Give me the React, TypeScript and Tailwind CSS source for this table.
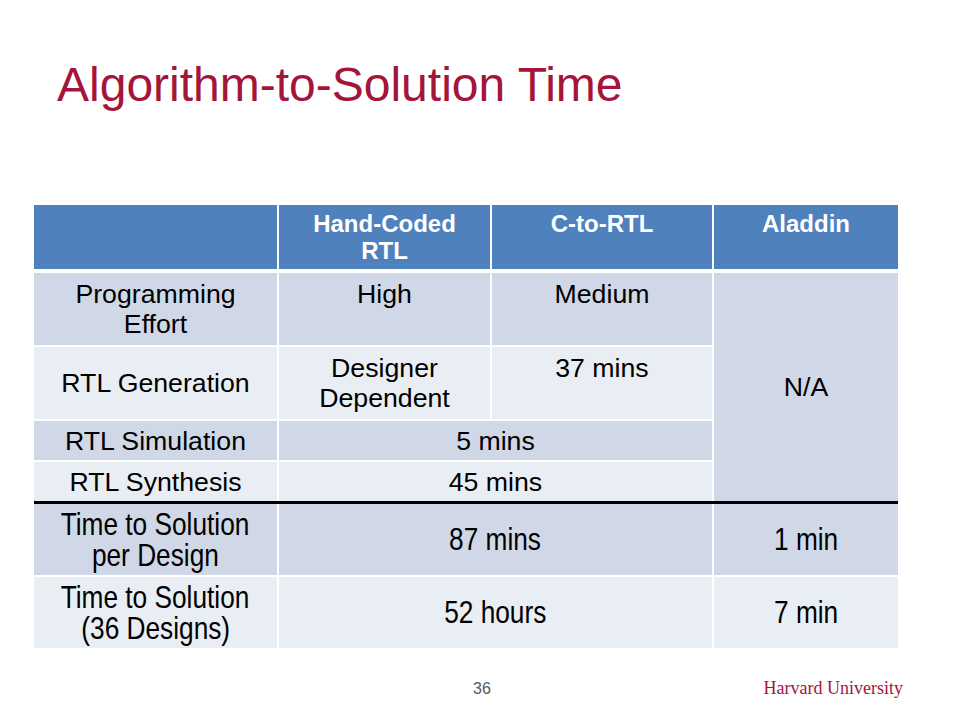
import React from "react";

const sans = "font-['Liberation_Sans',Arial,sans-serif]";

const odd = "bg-[#d0d8e8]";
const even = "bg-[#e9edf4]";

function Cell({
  children,
  className = "",
}: {
  children?: React.ReactNode;
  className?: string;
}) {
  return (
    <div className={`flex flex-col items-center text-center text-black text-[26.7px] leading-[30px] ${className}`}>
      {children}
    </div>
  );
}

function N({ children }: { children: React.ReactNode }) {
  return <span className="inline-block whitespace-nowrap scale-x-[0.82] origin-center">{children}</span>;
}

function Head({ children }: { children?: React.ReactNode }) {
  return (
    <div className="h-[64px] bg-[#4f81bd] text-white font-bold text-[24px] leading-[27px] text-center pt-[5px]">
      {children}
    </div>
  );
}

export default function App() {
  return (
    <div className={`w-[960px] h-[720px] bg-white flex flex-col ${sans}`}>
      <h1 className="pt-[61px] pl-[57px] text-[48px] leading-[47px] text-[#a3153a] font-normal">
        Algorithm-to-Solution Time
      </h1>

      <div className="mt-[97px] ml-[34px] w-[864px]">
        <div className="grid grid-cols-[243px_211px_220px_184px] grid-rows-[66px_72px_72px_39px_39px] gap-x-[2px] gap-y-[2px]">
          {/* header */}
          <div className="h-[64px] bg-[#4f81bd]" />
          <Head>
            Hand-Coded
            <br />
            RTL
          </Head>
          <Head>C-to-RTL</Head>
          <Head>Aladdin</Head>

          {/* row 1 */}
          <Cell className={`${odd} justify-center`}>
            <span>Programming</span>
            <span>Effort</span>
          </Cell>
          <Cell className={`${odd} pt-[6px]`}>High</Cell>
          <Cell className={`${odd} pt-[6px]`}>Medium</Cell>
          <Cell className={`${odd} row-span-4 justify-center`}>N/A</Cell>

          {/* row 2 */}
          <Cell className={`${even} justify-center`}>RTL Generation</Cell>
          <Cell className={`${even} justify-center`}>
            <span>Designer</span>
            <span>Dependent</span>
          </Cell>
          <Cell className={`${even} pt-[6px]`}>37 mins</Cell>

          {/* row 3 */}
          <Cell className={`${odd} justify-center`}>RTL Simulation</Cell>
          <Cell className={`${odd} col-span-2 justify-center`}>5 mins</Cell>

          {/* row 4 */}
          <Cell className={`${even} justify-center`}>RTL Synthesis</Cell>
          <Cell className={`${even} col-span-2 justify-center`}>45 mins</Cell>
        </div>

        <div className="h-[3px] bg-black" />

        <div className="grid grid-cols-[243px_433px_184px] grid-rows-[71px_71px] gap-x-[2px] gap-y-[2px] text-black">
          <div className={`${odd} flex flex-col items-center justify-center text-[32px] leading-[31px]`}>
            <N>Time to Solution</N>
            <N>per Design</N>
          </div>
          <div className={`${odd} flex items-center justify-center text-[32px] leading-[31px]`}>
            <N>87 mins</N>
          </div>
          <div className={`${odd} flex items-center justify-center text-[32px] leading-[31px]`}>
            <N>1 min</N>
          </div>

          <div className={`${even} flex flex-col items-center justify-center text-[32px] leading-[31px]`}>
            <N>Time to Solution</N>
            <N>(36 Designs)</N>
          </div>
          <div className={`${even} flex items-center justify-center text-[32px] leading-[31px]`}>
            <N>52 hours</N>
          </div>
          <div className={`${even} flex items-center justify-center text-[32px] leading-[31px]`}>
            <N>7 min</N>
          </div>
        </div>
      </div>

      <div className="mt-[27px] grid grid-cols-[1fr_auto_1fr] items-center h-[20px]">
        <div />
        <div className="text-[16px] text-[#595959] pl-[4px]">36</div>
        <div className="flex justify-end pr-[57px] font-['Liberation_Serif',serif] text-[18px] text-[#a3153a]">
          Harvard University
        </div>
      </div>
    </div>
  );
}
